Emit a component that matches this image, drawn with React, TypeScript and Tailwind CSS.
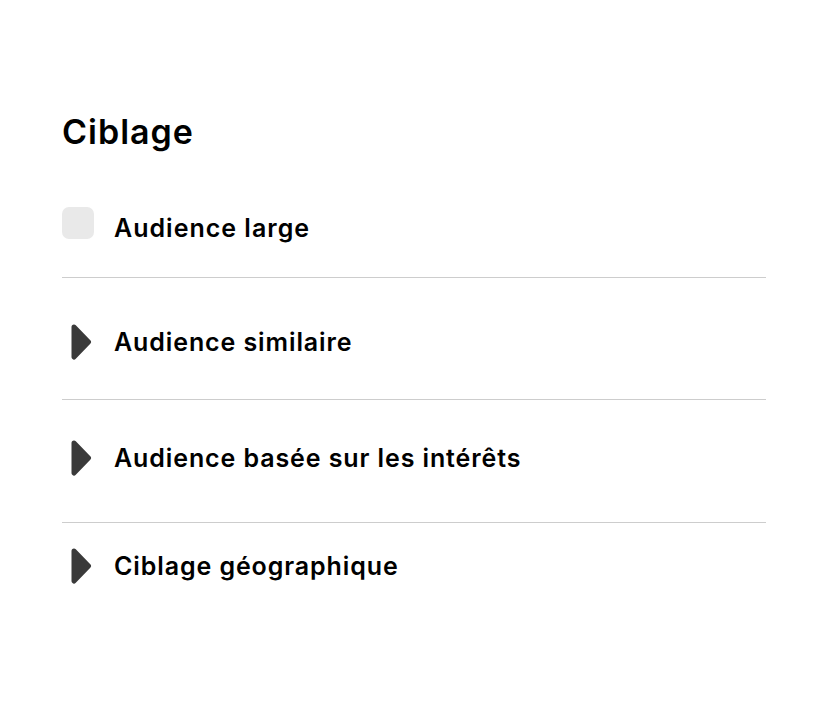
import React from 'react';

function Caret() {
  return (
    <svg width="22" height="36" viewBox="0 0 22 36" className="shrink-0 ml-2">
      <path
        d="M4 3 L18.5 18 L4 33 Z"
        fill="#3a3a3a"
        stroke="#3a3a3a"
        strokeWidth="5"
        strokeLinejoin="round"
      />
    </svg>
  );
}

const sections = ['Audience similaire', 'Audience basée sur les intérêts', 'Ciblage géographique'];

export default function App() {
  return (
    <div
      className="min-h-screen bg-white text-black"
      style={{ fontFamily: 'Inter, "Noto Sans", sans-serif' }}
    >
      <div className="pl-[62px] pr-[66px] pt-[112px]">
        {/* Header */}
        <h1 className="text-[34px] leading-[40px] font-semibold tracking-[1px]">Ciblage</h1>

        {/* Broad audience */}
        <div className="flex items-start gap-5 mt-[55px] pb-[33px] border-b border-[#cdcdcd]">
          <div className="w-8 h-8 rounded-[7px] bg-[#e9e9e9] shrink-0" />
          <span className="text-[25px] leading-8 font-semibold tracking-[1px] mt-[5px]">Audience large</span>
        </div>

        {/* Collapsible sections */}
        <div className="flex items-center gap-[22px] pt-[46px] pb-[39px] border-b border-[#cdcdcd]">
          <Caret />
          <span className="text-[25px] leading-8 font-semibold tracking-[0.9px]">{sections[0]}</span>
        </div>
        <div className="flex items-center gap-[22px] pt-[40px] pb-[46px] border-b border-[#cdcdcd]">
          <Caret />
          <span className="text-[25px] leading-8 font-semibold tracking-[0.9px]">{sections[1]}</span>
        </div>
        <div className="flex items-center gap-[22px] pt-[25px]">
          <Caret />
          <span className="text-[25px] leading-8 font-semibold tracking-[0.9px]">{sections[2]}</span>
        </div>
      </div>
    </div>
  );
}
